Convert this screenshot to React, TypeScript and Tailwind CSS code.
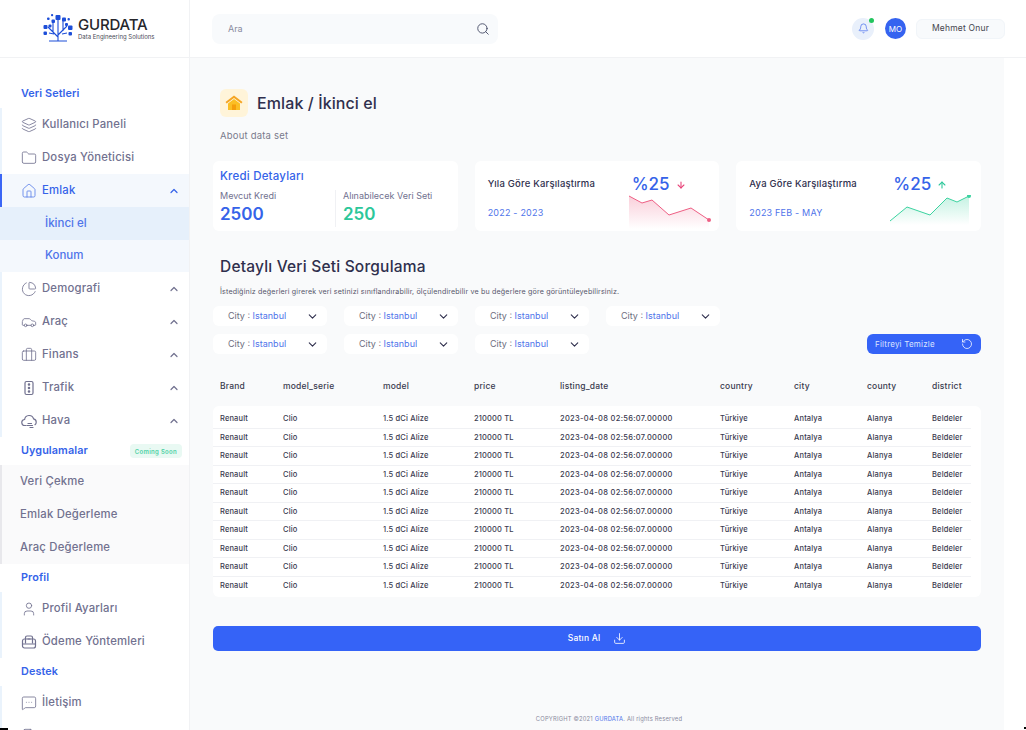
import {
  Layers, Folder, Home, PieChart, Car, Briefcase, User, ChevronUp, ChevronDown,
  Bell, Search, RotateCcw, Download, MessageSquareMore, ArrowDown, ArrowUp, FileText,
} from "lucide-react";
import type { ReactNode } from "react";

function TrafficIcon() {
  return (
    <svg width="16" height="16" viewBox="0 0 16 16" fill="none" stroke="currentColor" strokeWidth="1.2">
      <rect x="4" y="1.5" width="8" height="13" rx="1.5" />
      <circle cx="8" cy="4.5" r="0.7" fill="currentColor" />
      <circle cx="8" cy="8" r="0.7" fill="currentColor" />
      <circle cx="8" cy="11.5" r="0.7" fill="currentColor" />
    </svg>
  );
}

function PayIcon() {
  return (
    <svg width="16" height="16" viewBox="0 0 16 16" fill="none" stroke="currentColor" strokeWidth="1.2">
      <rect x="1.5" y="5" width="13" height="9" rx="2" />
      <path d="M4.5 9.5V3.5a1.5 1.5 0 0 1 1.5-1.5h4a1.5 1.5 0 0 1 1.5 1.5v6" />
      <path d="M1.5 10h13M6.5 5h3" />
    </svg>
  );
}

function CloudIcon() {
  return (
    <svg width="17" height="16" viewBox="0 0 17 16" fill="none" stroke="currentColor" strokeWidth="1.2" strokeLinecap="round">
      <path d="M5 12.5H4a3 3 0 0 1-.4-6 4.6 4.6 0 0 1 9-.6 3.3 3.3 0 0 1 2.6 3.2 3.3 3.3 0 0 1-1.2 2.6" />
      <path d="M7 10.5h3.5M6 12.5h5.5M9 14.5h3" />
    </svg>
  );
}

function Logo() {
  return (
    <svg width="30" height="30" viewBox="0 0 30 30" fill="none" stroke="#1d4ed8">
      <path d="M6 27h18M15 27V13M15 23L5 13M15 21l9-9M10 18V8M20 17V6M15 13V5M6 19l5 1M24 19l-5 1" strokeWidth="1.1" />
      <g fill="#1d4ed8" stroke="none">
        <rect x="12.5" y="1" width="5" height="5" rx="1" />
        <rect x="19" y="3.5" width="4" height="4" rx="1" />
        <rect x="8.5" y="5.5" width="3.5" height="3.5" rx="1" />
        <rect x="4" y="3.5" width="2.6" height="2.6" rx="1" />
        <rect x="0.5" y="11" width="4" height="4" rx="1" />
        <rect x="5.5" y="10.5" width="3" height="3" rx="1" />
        <rect x="0.5" y="17.5" width="3.5" height="3.5" rx="1" />
        <rect x="25" y="11.5" width="4.5" height="4.5" rx="1" />
        <rect x="22" y="9" width="3" height="3" rx="1" />
        <rect x="25.5" y="18" width="3.5" height="3.5" rx="1" />
        <rect x="8" y="0" width="2.2" height="2.2" rx="1" />
        <rect x="24.5" y="4" width="2.4" height="2.4" rx="1" />
      </g>
    </svg>
  );
}

const blue = "text-[#3563e9]";

function GroupTitle({ children, extra }: { children: ReactNode; extra?: ReactNode }) {
  return (
    <div className="h-[28px] shrink-0 pl-[21px] pr-[7px] flex items-center justify-between bg-white">
      <span className={`text-[10.8px] font-semibold tracking-[0.1px] ${blue}`}>{children}</span>
      {extra}
    </div>
  );
}

function NavRow({ icon, label, chevron, active }: { icon?: ReactNode; label: string; chevron?: boolean; active?: boolean }) {
  return (
    <div
      className={`h-[33px] shrink-0 flex items-center pl-[19px] pr-[9px] border-l-2 ${
        active ? "bg-[#f4f8fd] border-[#3b66f5]" : "bg-white border-[#eaf3fc]"
      }`}
    >
      <span className={`w-[21px] shrink-0 flex ${active ? "text-[#5b7fe8]" : "text-[#71718f]"}`}>{icon}</span>
      <span className={`flex-1 text-[11.3px] font-medium tracking-[0.2px] ${active ? blue : "text-[#71718f]"}`}>{label}</span>
      {chevron && <ChevronUp size={12} strokeWidth={2.4} className={active ? "text-[#3563e9]" : "text-[#71718f]"} />}
    </div>
  );
}

const iconProps = { size: 16, strokeWidth: 1.25 };

function Sidebar() {
  return (
    <aside className="w-[190px] shrink-0 bg-white border-r border-[#f1f2f4] flex flex-col overflow-hidden">
      <div className="h-[58px] shrink-0 border-b border-[#f1f2f4] flex items-center pl-[43px] gap-[5px]">
        <Logo />
        <div className="flex flex-col">
          <span className="text-[15px] leading-[15px] font-medium text-[#26262b] tracking-[-0.2px]">GURDATA</span>
          <span className="text-[6px] leading-[9px] text-[#4b4b57]">Data Engineering Solutions</span>
        </div>
      </div>
      <div className="h-[22px] shrink-0" />
      <GroupTitle>Veri Setleri</GroupTitle>
      <NavRow icon={<Layers {...iconProps} />} label="Kullanıcı Paneli" />
      <NavRow icon={<Folder {...iconProps} />} label="Dosya Yöneticisi" />
      <NavRow active icon={<Home {...iconProps} />} label="Emlak" chevron />
      <div className="h-[33px] shrink-0 bg-[#e6f0fb] pl-[45px] flex items-center text-[11.5px] font-medium text-[#4f74ea]">İkinci el</div>
      <div className="h-[32px] shrink-0 bg-[#f4f8fd] pl-[45px] flex items-center text-[11.5px] font-medium text-[#4f74ea]">Konum</div>
      <NavRow icon={<PieChart {...iconProps} />} label="Demografi" chevron />
      <NavRow icon={<Car {...iconProps} />} label="Araç" chevron />
      <NavRow icon={<Briefcase {...iconProps} />} label="Finans" chevron />
      <NavRow icon={<TrafficIcon />} label="Trafik" chevron />
      <NavRow icon={<CloudIcon />} label="Hava" chevron />
      <GroupTitle
        extra={
          <span className="h-[14px] px-[5px] rounded-[4px] bg-[#e9f9f3] text-[#4fd1a5] text-[6px] font-semibold flex items-center tracking-[0.3px]">
            Coming Soon
          </span>
        }
      >
        Uygulamalar
      </GroupTitle>
      {["Veri Çekme", "Emlak Değerleme", "Araç Değerleme"].map((t) => (
        <div key={t} className="h-[33px] shrink-0 bg-[#fafafb] border-l-2 border-[#e8e8ec] pl-[18px] flex items-center text-[11.3px] font-medium tracking-[0.2px] text-[#71718f]">
          {t}
        </div>
      ))}
      <GroupTitle>Profil</GroupTitle>
      <NavRow icon={<User {...iconProps} />} label="Profil Ayarları" />
      <NavRow icon={<PayIcon />} label="Ödeme Yöntemleri" />
      <GroupTitle>Destek</GroupTitle>
      <NavRow icon={<MessageSquareMore {...iconProps} />} label="İletişim" />
      <NavRow icon={<FileText {...iconProps} />} label="" />
    </aside>
  );
}

function Topbar() {
  return (
    <header className="h-[58px] shrink-0 border-b border-[#f1f2f4] bg-white flex items-center pl-[22px] pr-[21px]">
      <div className="w-[286px] h-[30px] rounded-[8px] bg-[#f8fafc] flex items-center justify-between pl-[16px] pr-[8px]">
        <span className="text-[9px] text-[#8a8a9e]">Ara</span>
        <Search size={14} strokeWidth={1.5} className="text-[#3f4560]" />
      </div>
      <div className="ml-auto flex items-center gap-[11px]">
        <div className="relative w-[22px] h-[22px] rounded-full bg-[#e9f0fb] flex items-center justify-center text-[#3f66ee]">
          <Bell size={11} strokeWidth={1.5} />
          <span className="absolute top-0 right-0 w-[5px] h-[5px] rounded-full bg-[#22c55e]" />
        </div>
        <div className="flex items-center gap-[10px]">
          <div className="w-[21px] h-[21px] rounded-full bg-[#3563f0] text-white text-[8px] flex items-center justify-center">MO</div>
          <div className="w-[89px] h-[20px] rounded-[6px] bg-[#f8fafc] border border-[#f1f5f9] flex items-center justify-center text-[8.5px] tracking-[0.2px] text-[#46464f]">
            Mehmet Onur
          </div>
        </div>
      </div>
    </header>
  );
}

function Sparkline({ color, area, line, dot }: { color: string; area: string; line: string; dot: [number, number] }) {
  const id = `g${color.slice(1)}`;
  return (
    <svg width="82" height="34" viewBox="0 0 82 34" fill="none">
      <defs>
        <linearGradient id={id} x1="0" y1="0" x2="0" y2="1">
          <stop offset="0" stopColor={color} stopOpacity="0.3" />
          <stop offset="1" stopColor={color} stopOpacity="0" />
        </linearGradient>
      </defs>
      <path d={area} fill={`url(#${id})`} />
      <path d={line} stroke={color} strokeWidth="1" />
      <circle cx={dot[0]} cy={dot[1]} r="2" fill={color} />
    </svg>
  );
}

function CompareCard({ title, range, arrow, spark }: { title: string; range: string; arrow: ReactNode; spark: ReactNode }) {
  return (
    <div className="w-[245px] h-[70px] rounded-[6px] bg-white flex pl-[13px]">
      <div className="w-[144px] shrink-0 flex flex-col pt-[16px]">
        <div className="text-[9.5px] leading-[14px] font-medium tracking-[0.2px] text-[#2f2f4d]">{title}</div>
        <div className="mt-[16px] text-[9px] leading-[12px] tracking-[0.2px] text-[#4f74ea]">{range}</div>
      </div>
      <div className="flex flex-col pt-[14px]">
        <div className="flex items-center gap-[6px] h-[20px]">
          <span className={`text-[17px] font-medium ${blue}`}>%25</span>
          {arrow}
        </div>
        <div className="-ml-[3px]">{spark}</div>
      </div>
    </div>
  );
}

function Filter({ w }: { w: string }) {
  return (
    <div className={`${w} h-[20px] rounded-[6px] bg-white flex items-center justify-between pl-[15px] pr-[8px] text-[9px] text-[#6e6e80]`}>
      <span>
        City : <span className="text-[#4f74ea]">Istanbul</span>
      </span>
      <ChevronDown size={13} strokeWidth={2} className="text-[#2f2f4d]" />
    </div>
  );
}

const cols = "grid grid-cols-[63px_100px_91px_86px_160px_74px_73px_65px_1fr] pl-[7px] items-center";
const headers = ["Brand", "model_serie", "model", "price", "listing_date", "country", "city", "county", "district"];
const row = ["Renault", "Clio", "1.5 dCi Alize", "210000 TL", "2023-04-08 02:56:07.00000", "Türkiye", "Antalya", "Alanya", "Beldeler"];

function Content() {
  return (
    <main className="flex-1 bg-[#f9fafb] mr-[22px] pl-[23px] pr-[23px] flex flex-col min-h-0">
      <div className="pl-[7px] pt-[31px] flex items-center gap-[9px]">
        <div className="w-[28px] h-[28px] rounded-[6px] bg-[#fff4d9] flex items-center justify-center">
          <svg width="18" height="16" viewBox="0 0 18 16">
            <path d="M9 0.5L0.5 7l1.2 1.4L9 3l7.3 5.4L17.5 7z" fill="#f5a524" />
            <path d="M3 8.5L9 4l6 4.5V15H3z" fill="#fbbf24" />
            <rect x="7" y="9.5" width="4" height="5.5" fill="#f59e0b" />
          </svg>
        </div>
        <h1 className="text-[16px] font-medium tracking-[0.1px] text-[#2f2f4d]">Emlak / İkinci el</h1>
      </div>
      <p className="pl-[7px] mt-[13px] text-[9.5px] leading-[12px] tracking-[0.2px] text-[#7a7a8c]">About data set</p>

      <div className="mt-[19px] flex gap-[17px]">
        <div className="w-[245px] h-[70px] rounded-[6px] bg-white pl-[7px] pt-[8px]">
          <div className={`text-[11.5px] leading-[14px] font-medium tracking-[0.2px] ${blue}`}>Kredi Detayları</div>
          <div className="flex mt-[7px]">
            <div className="w-[116px] border-r border-[#f0f1f4] h-[37px]">
              <div className="text-[9px] leading-[11px] text-[#71718f]">Mevcut Kredi</div>
              <div className={`text-[17px] leading-[26px] font-semibold ${blue}`}>2500</div>
            </div>
            <div className="pl-[7px]">
              <div className="text-[9px] leading-[11px] text-[#71718f]">Alınabilecek Veri Seti</div>
              <div className="text-[17px] leading-[26px] font-semibold text-[#2cc79a]">250</div>
            </div>
          </div>
        </div>
        <CompareCard
          title="Yıla Göre Karşılaştırma"
          range="2022 - 2023"
          arrow={<ArrowDown size={10} strokeWidth={2.6} className="text-[#e8457a]" />}
          spark={
            <Sparkline
              color="#ee5f84"
              line="M0 1L13 8 23 5 40 20 62 13 80 25"
              area="M0 1L13 8 23 5 40 20 62 13 80 25V34H0z"
              dot={[80, 25]}
            />
          }
        />
        <CompareCard
          title="Aya Göre Karşılaştırma"
          range="2023 FEB - MAY"
          arrow={<ArrowUp size={10} strokeWidth={2.6} className="text-[#2cc79a]" />}
          spark={
            <Sparkline
              color="#3cd3a0"
              line="M0 26L17 12 40 20 57 3 67 7 79 1"
              area="M0 26L17 12 40 20 57 3 67 7 79 1V30H0z"
              dot={[79, 1]}
            />
          }
        />
      </div>

      <h2 className="pl-[7px] mt-[26px] text-[15.5px] leading-[20px] font-medium tracking-[0.2px] text-[#2f2f4d]">Detaylı Veri Seti Sorgulama</h2>
      <p className="pl-[7px] mt-[10px] text-[7.1px] leading-[10px] tracking-[0.17px] text-[#55556a]">
        İstediğiniz değerleri girerek veri setinizi sınıflandırabilir, ölçülendirebilir ve bu değerlere göre görüntüleyebilirsiniz.
      </p>

      <div className="mt-[9px] flex gap-[17px]">
        <Filter w="w-[114px]" />
        <Filter w="w-[114px]" />
        <Filter w="w-[114px]" />
        <Filter w="w-[114px]" />
      </div>
      <div className="mt-[8px] flex gap-[17px]">
        <Filter w="w-[114px]" />
        <Filter w="w-[114px]" />
        <Filter w="w-[114px]" />
        <div className="ml-auto w-[114px] h-[20px] rounded-[6px] bg-[#3563f7] text-white flex items-center justify-between pl-[8px] pr-[8px]">
          <span className="text-[8px] tracking-[0.2px] text-[#dbe4ff]">Filtreyi Temizle</span>
          <RotateCcw size={12} strokeWidth={1.5} />
        </div>
      </div>

      <div className={`${cols} mt-[22px] h-[20px] text-[8.5px] font-medium tracking-[0.2px] text-[#3a3a4f]`}>
        {headers.map((h) => (
          <span key={h}>{h}</span>
        ))}
      </div>
      <div className="mt-[10px] bg-white rounded-[6px] pt-[4px] pb-[2px]">
        {Array.from({ length: 10 }).map((_, i) => (
          <div key={i} className={`${cols} h-[18.5px] text-[7.5px] font-medium tracking-[0.15px] text-[#3a3a4f] ${i < 9 ? "border-b border-[#f0f1f4] mr-[10px]" : ""}`}>
            {row.map((c, j) => (
              <span key={j} className={j === 4 ? "tracking-[0.32px]" : ""}>{c}</span>
            ))}
          </div>
        ))}
      </div>

      <div className="mt-[29px] h-[25px] shrink-0 rounded-[5px] bg-[#3563f7] text-white flex items-center justify-center gap-[13px]">
        <span className="text-[8.5px] font-medium tracking-[0.2px]">Satın Al</span>
        <Download size={13} strokeWidth={1.5} />
      </div>

      <div className="mt-auto pb-[7px] pl-[24px] text-center text-[5.8px] leading-[8px] tracking-[0.2px] text-[#8a8a9e]">
        COPYRIGHT ©2021 <span className="text-[#4f74ea]">GURDATA</span>. All rights Reserved
      </div>
    </main>
  );
}

export default function App() {
  return (
    <div className="relative h-screen w-full overflow-hidden flex bg-white" style={{ fontFamily: "Inter, 'Noto Sans', sans-serif" }}>
      <Sidebar />
      <div className="flex-1 min-w-0 flex flex-col">
        <Topbar />
        <Content />
      </div>
      {/* corner specks in the capture */}
      <span className="absolute left-0 bottom-0 w-[8px] h-[2px] bg-black" />
      <span className="absolute right-0 bottom-[1px] w-[2px] h-[2px] bg-black" />
    </div>
  );
}
